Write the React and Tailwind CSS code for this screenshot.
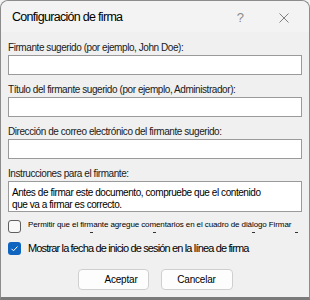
import React from "react";

function Field({ label, first }) {
  return (
    <div className={first ? "mt-[9px]" : "mt-[8px]"}>
      <div className="h-[14px] text-[10px] leading-[14px] tracking-[-0.43px] text-[#1a1a1a]">{label}</div>
      <div className="h-[20px] border border-[#9a9a9a] bg-white" />
    </div>
  );
}

export default function App() {
  return (
    <div className="h-[300px] w-[310px] bg-[#f3f3f3] font-['Liberation_Sans',Arial,sans-serif]">
      <div className="flex h-[300px] flex-col rounded-t-[8px] border-x border-t border-b-[3px] border-[#8c8c8c] border-b-[#7a7a7a] bg-[#f0f0f0]">
        <div className="flex h-[31px] items-center rounded-t-[8px] bg-[#f3f3f3] pl-[11px] pr-[20px] pt-[2px]">
          <div className="flex-1 text-[12.5px] tracking-[-0.7px] text-black">Configuración de firma</div>
          <div className="mr-[35px] text-[13px] text-[#8a8a8a]">?</div>
          <svg width="10" height="10" viewBox="0 0 10 10" className="text-[#808080]">
            <path d="M0.5 0.5 L9.5 9.5 M9.5 0.5 L0.5 9.5" stroke="currentColor" strokeWidth="1" />
          </svg>
        </div>
        <div className="flex flex-col px-[7px]">
          <Field first label="Firmante sugerido (por ejemplo, John Doe):" />
          <Field label="Título del firmante sugerido (por ejemplo, Administrador):" />
          <Field label="Dirección de correo electrónico del firmante sugerido:" />
          <div className="mt-[8px]">
            <div className="h-[14px] text-[10px] leading-[14px] tracking-[-0.43px] text-[#1a1a1a]">
              Instrucciones para el firmante:
            </div>
            <div className="h-[31px] border border-[#9a9a9a] bg-white pl-[3px] pt-[5px] text-[10px] leading-[12px] tracking-[-0.43px] text-black">
              Antes de firmar este documento, compruebe que el contenido
              <br />
              que va a firmar es correcto.
            </div>
          </div>
          <div className="mt-[8px] flex items-start">
            <div className="h-[13px] w-[13px] shrink-0 rounded-[3px] border border-[#5f5f5f] bg-[#f8f8f8]" />
            <div className="ml-[7px]">
              <div className="whitespace-nowrap text-[8px] leading-[9px] tracking-[-0.1px] text-black">
                Permitir que el firmante agregue comentarios en el cuadro de diálogo Firmar
              </div>
              <div className="relative h-[4px]">
                <span className="absolute left-[62px] top-[3px] h-px w-[3px] bg-[#333]" />
                <span className="absolute left-[125px] top-[3px] h-px w-[3px] bg-[#333]" />
                <span className="absolute left-[224px] top-[3px] h-px w-[3px] bg-[#333]" />
                <span className="absolute left-[267px] top-[3px] h-px w-[3px] bg-[#333]" />
              </div>
            </div>
          </div>
          <div className="mt-[8px] flex h-[14px] items-center">
            <div className="flex h-[13px] w-[13px] shrink-0 items-center justify-center rounded-[3px] bg-[#0f64c0]">
              <svg width="9" height="9" viewBox="0 0 9 9">
                <path d="M1.5 4.8 L3.5 6.8 L7.5 2.5" fill="none" stroke="#fff" strokeWidth="1" />
              </svg>
            </div>
            <div className="ml-[7px] whitespace-nowrap text-[11px] leading-[14px] tracking-[-0.85px] text-black">
              Mostrar la fecha de inicio de sesión en la línea de firma
            </div>
          </div>
          <div className="mt-[14px] flex justify-center gap-[12px]">
            <button className="h-[21px] w-[71px] rounded-[4px] border border-[#cfcfcf] bg-[#fdfdfd] pl-[16px] text-[10px] tracking-[-0.2px] text-black">
              Aceptar
            </button>
            <button className="h-[21px] w-[72px] rounded-[4px] border border-[#cfcfcf] bg-[#fdfdfd] text-[10px] tracking-[-0.2px] text-black">
              Cancelar
            </button>
          </div>
        </div>
      </div>
    </div>
  );
}
